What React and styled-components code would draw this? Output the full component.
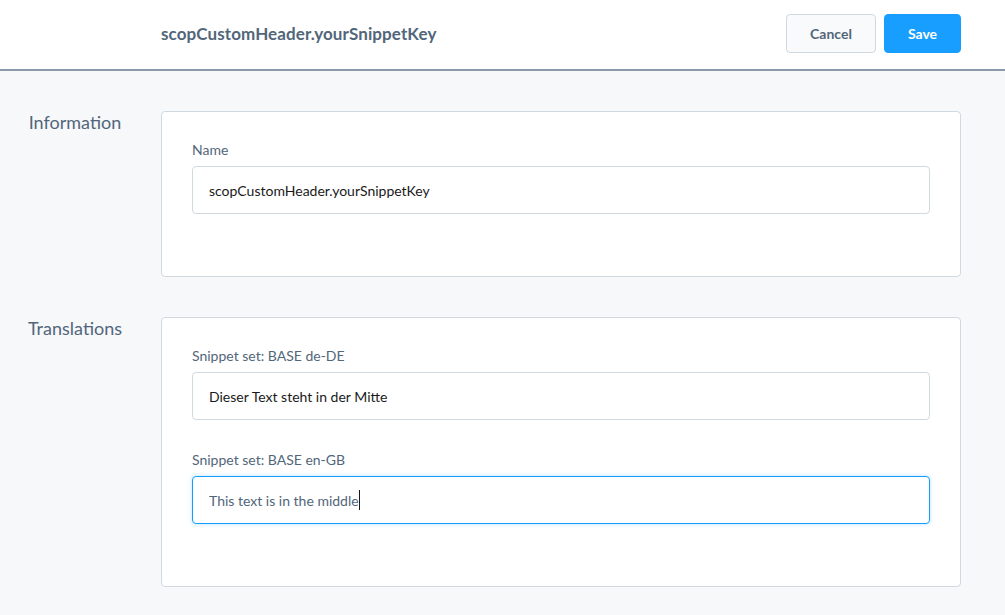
import React from "react";
import styled, { createGlobalStyle } from "styled-components";

const GlobalStyle = createGlobalStyle`
  html, body {
    margin: 0;
    padding: 0;
    background: #f7f8fa;
    font-family: "Source Sans Pro", Lato, "Liberation Sans", sans-serif;
    -webkit-font-smoothing: antialiased;
  }
  * { box-sizing: border-box; }
`;

const Page = styled.div`
  width: 1005px;
  min-height: 615px;
  background: #f7f8fa;
`;

const Header = styled.header`
  height: 71px;
  display: flex;
  align-items: center;
  justify-content: space-between;
  padding: 0 44px 2px 161px;
  background: #ffffff;
  border-bottom: 2px solid #8a9aab;
`;

const Title = styled.h1`
  margin: 0;
  font-size: 17px;
  font-weight: 700;
  color: #52667a;
  letter-spacing: 0.1px;
`;

const Actions = styled.div`
  display: flex;
  gap: 8px;
`;

const Button = styled.button`
  height: 39px;
  padding: 0;
  width: ${(p) => (p.$primary ? "77px" : "90px")};
  border-radius: 4px;
  border: 1px solid ${(p) => (p.$primary ? "#189eff" : "#d1d9e0")};
  background: ${(p) => (p.$primary ? "#189eff" : "#f9fafb")};
  color: ${(p) => (p.$primary ? "#ffffff" : "#52667a")};
  font-family: inherit;
  font-size: 14px;
  font-weight: 700;
  cursor: pointer;
`;

const Content = styled.main`
  padding: 40px 44px 0 0;
  display: flex;
  flex-direction: column;
  gap: 40px;
`;

const Section = styled.section`
  display: grid;
  grid-template-columns: 150px 800px;
  column-gap: 11px;
  align-items: start;
`;

const SectionLabel = styled.h2`
  margin: 0;
  text-align: center;
  font-size: 18px;
  font-weight: 400;
  color: #52667a;
`;

const Card = styled.div`
  background: #ffffff;
  border: 1px solid #d1d9e0;
  border-radius: 4px;
  padding: 29px 30px 30px;
`;

const Field = styled.div`
  display: flex;
  flex-direction: column;
  margin-bottom: 32px;
  & + & {
    margin-top: -1px;
  }
`;

const Label = styled.label`
  font-size: 14px;
  line-height: 18px;
  color: #52667a;
  margin-bottom: 7px;
`;

const InputWrap = styled.div`
  position: relative;
`;

const Input = styled.input`
  display: block;
  height: 48px;
  width: 100%;
  padding: 0 16px;
  border: 1px solid ${(p) => (p.$focused ? "#189eff" : "#d1d9e0")};
  box-shadow: ${(p) => (p.$focused ? "0 0 4px rgba(24, 158, 255, 0.3)" : "none")};
  border-radius: 4px;
  background: #ffffff;
  font-family: inherit;
  font-size: 14px;
  color: ${(p) => (p.$focused ? "#52667a" : "#1a1a1a")};
  outline: none;
`;

const Caret = styled.span`
  position: absolute;
  top: 14px;
  left: ${(p) => p.$left}px;
  width: 1px;
  height: 20px;
  background: #1a1a1a;
`;

function App() {
  return (
    <Page>
      <GlobalStyle />
      <Header>
        <Title>scopCustomHeader.yourSnippetKey</Title>
        <Actions>
          <Button>Cancel</Button>
          <Button $primary>Save</Button>
        </Actions>
      </Header>
      <Content>
        <Section>
          <SectionLabel>Information</SectionLabel>
          <Card>
            <Field>
              <Label>Name</Label>
              <Input readOnly value="scopCustomHeader.yourSnippetKey" />
            </Field>
          </Card>
        </Section>
        <Section>
          <SectionLabel>Translations</SectionLabel>
          <Card>
            <Field>
              <Label>Snippet set: BASE de-DE</Label>
              <Input readOnly value="Dieser Text steht in der Mitte" />
            </Field>
            <Field>
              <Label>Snippet set: BASE en-GB</Label>
              <InputWrap>
                <Input $focused readOnly value="This text is in the middle" />
                <Caret $left={167} />
              </InputWrap>
            </Field>
          </Card>
        </Section>
      </Content>
    </Page>
  );
}

export default App;
